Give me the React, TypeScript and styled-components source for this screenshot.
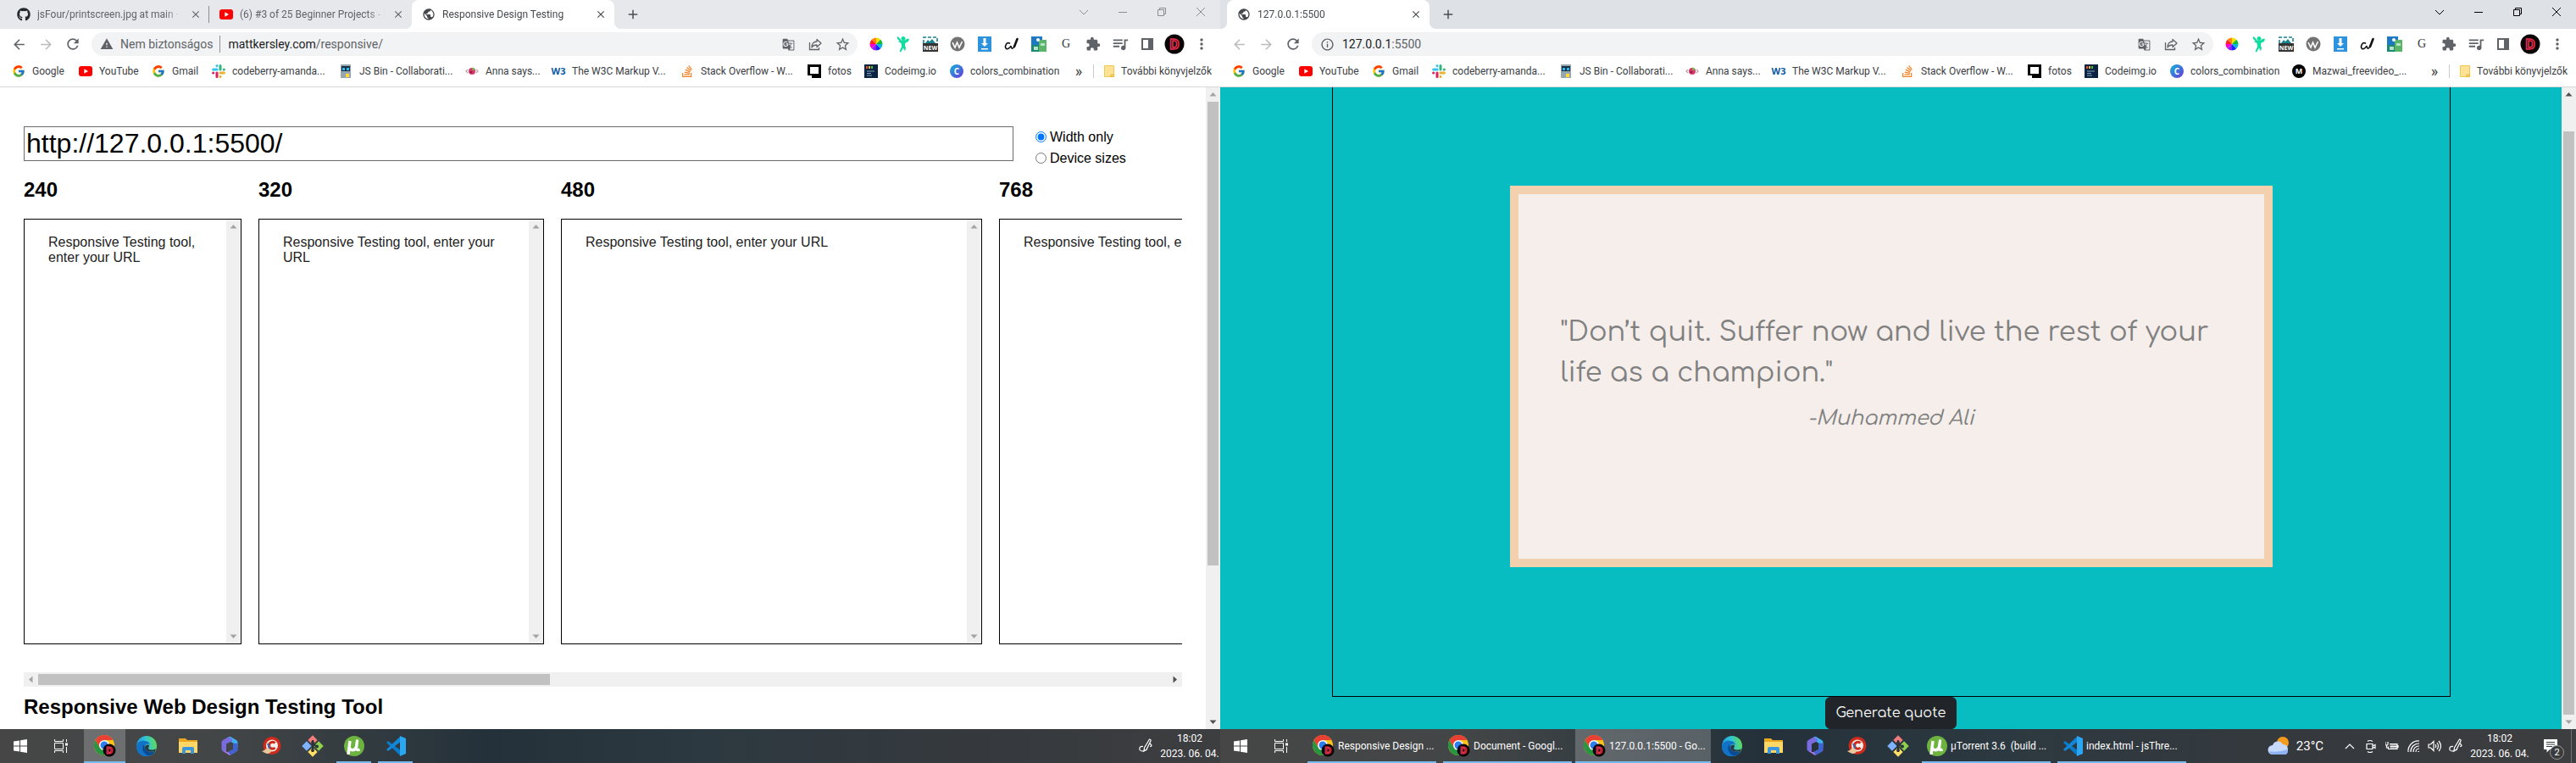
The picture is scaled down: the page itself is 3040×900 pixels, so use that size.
import React, { ReactNode } from "react";
import styled, { createGlobalStyle, css } from "styled-components";
import { FaGithub, FaStackOverflow } from "react-icons/fa";
import { FcGoogle } from "react-icons/fc";
import {
  MdAdd,
  MdArrowBack,
  MdArrowForward,
  MdClose,
  MdExtension,
  MdGTranslate,
  MdInfoOutline,
  MdMoreVert,
  MdPublic,
  MdQueueMusic,
  MdRefresh,
  MdStarBorder,
  MdWarning,
} from "react-icons/md";

const ui = `"Segoe UI", Roboto, "Open Sans", sans-serif`;
const arial = `Arial, "Liberation Sans", sans-serif`;
const rounded = `Comfortaa, Lato, sans-serif`;

const GlobalStyle = createGlobalStyle`
  * { box-sizing: border-box; }
  body { margin: 0; font-family: ${ui}; overflow: hidden; }
  button { border: 0; padding: 0; background: none; font: inherit; color: inherit; cursor: pointer; }
  a { color: inherit; text-decoration: none; }
  svg { display: block; flex: none; }
`;

/* ---------- Layout ---------- */

const Desktop = styled.div`
  display: grid;
  grid-template-columns: 18fr 20fr;
  height: 100vh;
`;

const Screen = styled.section`
  display: flex;
  flex-direction: column;
  min-width: 0;
  min-height: 0;
`;

const Viewport = styled.div`
  display: flex;
  flex: 1;
  min-height: 0;
  background: #fff;
`;

/* ---------- Browser chrome ---------- */

const TabStrip = styled.div<{ $focused: boolean }>`
  display: flex;
  align-items: stretch;
  height: 34px;
  padding-left: 8px;
  background: ${(p) => (p.$focused ? "#dee1e6" : "#e7e8ec")};
  color: ${(p) => (p.$focused ? "#000" : "#8b8d91")};
`;

const TabItem = styled.div<{ $active?: boolean; $divider?: boolean }>`
  position: relative;
  display: flex;
  align-items: center;
  gap: 8px;
  width: 239px;
  padding: 0 8px 0 12px;
  color: #5f6368;
  font-size: 12px;
  ${(p) =>
    p.$active &&
    css`
      background: #fff;
      color: #45494d;
      border-radius: 8px 8px 0 0;
      &::before,
      &::after {
        content: "";
        position: absolute;
        bottom: 0;
        width: 8px;
        height: 8px;
      }
      &::before {
        left: -8px;
        background: radial-gradient(circle at 0 0, transparent 8px, #fff 8px);
      }
      &::after {
        right: -8px;
        background: radial-gradient(circle at 100% 0, transparent 8px, #fff 8px);
      }
    `}
  ${(p) =>
    p.$divider &&
    css`
      &::after {
        content: "";
        position: absolute;
        right: 0;
        top: 7px;
        width: 1px;
        height: 20px;
        background: #8a8d91;
      }
    `}
`;

const TabTitle = styled.span`
  flex: 1;
  overflow: hidden;
  white-space: nowrap;
  mask-image: linear-gradient(90deg, #000 88%, transparent);
`;

const IconButton = styled.button<{ $size?: number }>`
  display: flex;
  align-items: center;
  justify-content: center;
  flex: none;
  width: ${(p) => p.$size ?? 32}px;
  height: ${(p) => Math.min(p.$size ?? 28, 28)}px;
`;

const NewTab = styled(IconButton)`
  align-self: center;
  margin-left: 8px;
  color: #4b4e52;
`;

const Caption = styled.div`
  display: flex;
  align-items: center;
  height: 28px;
  margin-left: auto;
`;

const CaptionButton = styled.button`
  display: flex;
  align-items: center;
  justify-content: center;
  width: 46px;
  height: 28px;
`;

const Toolbar = styled.div`
  display: flex;
  align-items: center;
  height: 36px;
  padding: 0 6px;
  background: #fff;
  color: #5f6368;
`;

const Faded = styled.span<{ $on: boolean }>`
  color: ${(p) => (p.$on ? "#5f6368" : "#babcbe")};
`;

const AddressBar = styled.div`
  display: flex;
  align-items: center;
  flex: 1;
  height: 28px;
  margin: 0 6px;
  padding: 0 2px 0 10px;
  border-radius: 14px;
  background: #f1f3f4;
  font-size: 14px;
`;

const SiteInfo = styled.button<{ $warn: boolean }>`
  display: flex;
  align-items: center;
  gap: 8px;
  padding-right: ${(p) => (p.$warn ? 8 : 0)}px;
  margin-right: 9px;
  white-space: nowrap;
  border-right: ${(p) => (p.$warn ? "1px solid #8d9094" : "0")};
  line-height: 20px;
`;

const Url = styled.span`
  flex: 1;
  white-space: nowrap;
  b {
    font-weight: 400;
    color: #202124;
  }
`;

const Extensions = styled.div`
  display: flex;
  align-items: center;
`;

const BookmarksBar = styled.nav`
  display: flex;
  align-items: center;
  height: 33px;
  padding: 0 10px 4px 14px;
  background: #fff;
  border-bottom: 1px solid #d5d7da;
  color: #3c4043;
  font-size: 12px;
`;

const Bookmark = styled.a<{ $width?: number }>`
  display: flex;
  align-items: center;
  gap: 8px;
  flex: none;
  width: ${(p) => (p.$width ? p.$width + "px" : "auto")};
  white-space: nowrap;
`;

const More = styled.button`
  width: 20px;
  margin-left: auto;
  padding-right: 4px;
  font-size: 18px;
  line-height: 20px;
`;

const Divider = styled.span`
  width: 1px;
  height: 16px;
  margin: 0 12px 0 5px;
  background: #c9cccf;
`;

/* ---------- Scroll bars ---------- */

const ScrollTrack = styled.div<{ $row?: boolean }>`
  display: flex;
  flex: none;
  flex-direction: ${(p) => (p.$row ? "row" : "column")};
  ${(p) => (p.$row ? "height: 17px;" : "width: 17px;")}
  background: #f0f0f0;
`;

const ScrollArrow = styled.button<{ $dim?: boolean }>`
  display: flex;
  align-items: center;
  justify-content: center;
  flex: none;
  width: 17px;
  height: 17px;
  color: ${(p) => (p.$dim ? "#a3a3a3" : "#505050")};
`;

const ScrollSpace = styled.div<{ $grow: number }>`
  flex: ${(p) => p.$grow} 1 0;
`;

const ScrollThumb = styled(ScrollSpace)<{ $row?: boolean }>`
  margin: ${(p) => (p.$row ? "2px 0" : "0 2px")};
  background: #c1c1c1;
`;

const turn = { up: 0, right: 90, down: 180, left: 270 };

const Arrow = ({ to, dim }: { to: keyof typeof turn; dim?: boolean }) => (
  <ScrollArrow $dim={dim} aria-label={"Scroll " + to}>
    <svg width="9" height="9" viewBox="0 0 9 9" fill="currentColor">
      <path d="M4.5 2 8.5 6.5h-8z" transform={`rotate(${turn[to]} 4.5 4.5)`} />
    </svg>
  </ScrollArrow>
);

type ScrollProps = { row?: boolean; before?: number; size?: number; after?: number; dimStart?: boolean; dimEnd?: boolean };

const ScrollBar = ({ row, before = 0, size = 0, after = 0, dimStart, dimEnd }: ScrollProps) => (
  <ScrollTrack $row={row}>
    <Arrow to={row ? "left" : "up"} dim={dimStart} />
    {before > 0 && <ScrollSpace $grow={before} />}
    {size > 0 ? <ScrollThumb $grow={size} $row={row} /> : <ScrollSpace $grow={1} />}
    {after > 0 && <ScrollSpace $grow={after} />}
    <Arrow to={row ? "right" : "down"} dim={dimEnd} />
  </ScrollTrack>
);

/* ---------- Icons ---------- */

const YouTube = () => (
  <svg width="16" height="16" viewBox="0 0 16 16">
    <rect y="2" width="16" height="12" rx="3" fill="#f00" />
    <path d="M6.3 5.3v5.4L11 8z" fill="#fff" />
  </svg>
);

const Slack = () => (
  <svg width="16" height="16" viewBox="0 0 16 16" strokeWidth="3" strokeLinecap="round" fill="none">
    <path d="M6 1.6v.2M1.6 6h4.5" stroke="#36c5f0" />
    <path d="M10 1.6V6M14.3 6h.1" stroke="#2eb67d" />
    <path d="M14.4 10H10M10 14.3v.1" stroke="#ecb22e" />
    <path d="M6 14.4V10M1.6 10h.1" stroke="#e01e5a" />
  </svg>
);

const JsBin = () => (
  <svg width="16" height="16" viewBox="0 0 16 16">
    <path d="M2 0h12v16H2z" fill="#97a5ad" />
    <path d="M3 2h10v6H3z" fill="#143048" />
    <path d="M4 4h3v3H4zM9 4h3v3H9z" fill="#35b8e8" />
    <path d="M8 11h4v4H8z" fill="#ffd93b" />
  </svg>
);

const Anna = () => (
  <svg width="16" height="16" viewBox="0 0 16 16" fill="none">
    <path d="M3 6 1 8l2 2M13 6l2 2-2 2" stroke="#b9a3a3" strokeWidth="1.3" />
    <circle cx="8" cy="8" r="4" fill="#d63a6e" />
    <path d="M8 3.500c2 0 3 1 4 2.500L8.500 7z" fill="#7bbf3f" />
    <circle cx="7" cy="9" r="1.300" fill="#8f1848" />
  </svg>
);

const Mark = styled.span<{ $bg?: string; $fg: string; $round?: boolean; $serif?: boolean; $px?: number }>`
  display: flex;
  align-items: center;
  justify-content: center;
  flex: none;
  width: 16px;
  height: 16px;
  border-radius: ${(p) => (p.$round ? "50%" : "0")};
  background: ${(p) => p.$bg ?? "none"};
  color: ${(p) => p.$fg};
  font: ${(p) => (p.$serif ? "400" : "700")} ${(p) => p.$px ?? 10}px/16px
    ${(p) => (p.$serif ? `"Liberation Serif", serif` : `"Open Sans", sans-serif`)};
`;

const Frame = () => (
  <svg width="16" height="16" viewBox="0 0 16 16">
    <path d="M0 0h16v16H5v-3H0z" fill="#000" />
    <path d="M3 3h10v8H3z" fill="#fff" />
    <path d="M0 13h4v3H0z" fill="#fff" />
  </svg>
);

const CodeImg = () => (
  <svg width="16" height="16" viewBox="0 0 16 16">
    <path d="M0 0h16v16H0z" fill="#0c2340" />
    <path d="M2 2h2v3H2z" fill="#e4572e" />
    <path d="M5 2h2v3H5z" fill="#f0b429" />
    <path d="M8 2h2v3H8z" fill="#3fb950" />
    <path d="M3 8h9M3 10.500h5M3 13h6" stroke="#7fa3c7" />
  </svg>
);

const Folder = () => (
  <svg width="12" height="16" viewBox="0 0 12 16">
    <path d="M.5 1.500h11v13H.5z" fill="#fde293" stroke="#f0c94a" />
    <path d="M8 12h3.500v2.500H8z" fill="#f6d365" stroke="#e8bb30" />
  </svg>
);

const Wheel = () => (
  <svg width="16" height="16" viewBox="-8 -8 16 16">
    {["#f0e000", "#f80", "#f22", "#f0c", "#82f", "#22f", "#0bd", "#1b3"].map((c, i) => (
      <path key={c} d="M0 0V-7.500A7.500 7.500 0 0 1 5.300-5.300z" fill={c} transform={`rotate(${i * -45})`} />
    ))}
  </svg>
);

const Fairy = () => (
  <svg width="16" height="20" viewBox="0 0 16 20" fill="#12dca0">
    <circle cx="8" cy="3.500" r="2.500" />
    <path d="M1 1c2 1 3 2 4.500 4.500L9 6l4-2.500 2 .5-1 3-3.500 1.500-.5 3 1 3-1 4-2-4-3 5-1.500-1L6 13l-.500-4L2 7l1.500-1L1 4z" />
  </svg>
);

const NewShot = () => (
  <svg width="18" height="18" viewBox="0 0 18 18">
    <path d="M1 8V1h16v7" fill="none" stroke="#16838f" strokeWidth="1.600" strokeDasharray="4 2" />
    <path d="m3 8 3-4 2 2 3-3 4 5z" fill="#16838f" />
    <path d="M0 8h18v10H0z" fill="#333" />
    <text x="9" y="16" fill="#fff" fontSize="7" fontWeight="700" textAnchor="middle" fontFamily="Open Sans">NEW</text>
  </svg>
);

const WIcon = () => (
  <svg width="18" height="18" viewBox="0 0 18 18">
    <circle cx="9" cy="9" r="8.500" fill="#737373" />
    <path d="m3 7 3 6 2.500-6 2.500 6 3.500-7" fill="none" stroke="#fff" strokeWidth="1.600" />
  </svg>
);

const Download = () => (
  <svg width="16" height="18" viewBox="0 0 16 18">
    <path d="M0 0h16v18H0z" fill="#2d93dc" />
    <path d="M6.500 2h3v6H12l-4 4-4-4h2.500zM4 14h8v1.500H4z" fill="#fff" />
  </svg>
);

const Brush = () => (
  <svg width="18" height="16" viewBox="0 0 18 16" fill="none" stroke="#111" strokeLinecap="round">
    <path d="M6.500 7C3 5 0 11 2.500 13.500 4.500 14.500 7 12 8 10c0 3 1.500 4 3 2" strokeWidth="1.600" />
    <path d="m15.500 2-3.500 9" strokeWidth="2.600" />
  </svg>
);

const MapTile = () => (
  <svg width="18" height="18" viewBox="0 0 18 18">
    <path d="M0 0h9v18H0z" fill="#1c8a70" />
    <path d="M0 0h13v10H0z" fill="#1f78c4" />
    <path d="M9 4h9v14H9z" fill="#58b56a" />
    <path d="M3 12h5v4H3zM11 8h5v3h-5z" fill="#b8e2c4" />
    <circle cx="8" cy="4" r="2" fill="#fff" />
  </svg>
);

const Share = () => (
  <svg width="16" height="16" viewBox="0 0 16 16" fill="none" stroke="currentColor" strokeWidth="1.300">
    <path d="M1.500 6v8.500h11V12" />
    <path d="M10 2.500 15 7l-5 4.500V9C7 9 5 10 4 12c0-4 2-7 6-7z" strokeLinejoin="round" />
  </svg>
);

const SidePanel = () => (
  <svg width="14" height="14" viewBox="0 0 14 14">
    <path d="M0 0h14v14H0zM2 2v10h6V2z" fill="#5f6368" fillRule="evenodd" />
  </svg>
);

const Profile = () => (
  <svg width="24" height="24" viewBox="0 0 24 24">
    <circle cx="12" cy="12" r="11.500" fill="#0a0608" />
    <text x="12" y="18" fill="none" stroke="#e8304f" strokeWidth="1.500" fontSize="16" fontWeight="700" textAnchor="middle" fontFamily="Open Sans">D</text>
  </svg>
);

const ChromeLogo = () => (
  <svg width="26" height="26" viewBox="0 0 26 26">
    <circle cx="12" cy="12" r="12" fill="#fbc21b" />
    <path d="M1.600 6A12 12 0 0 0 12 24l5.200-9L12 12 6.800 15z" fill="#27963f" />
    <path d="M12 6h10.400A12 12 0 0 0 1.600 6l5.200 9z" fill="#ea3f33" />
    <circle cx="12" cy="12" r="6" fill="#fff" />
    <circle cx="12" cy="12" r="4.500" fill="#2d7cf0" />
    <circle cx="18" cy="18" r="7.500" fill="#0a0608" />
    <text x="18" y="22" fill="none" stroke="#e8304f" strokeWidth="1.200" fontSize="11" fontWeight="700" textAnchor="middle" fontFamily="Open Sans">D</text>
  </svg>
);

const EdgeLogo = () => (
  <svg width="24" height="24" viewBox="0 0 24 24">
    <defs>
      <linearGradient id="edgeTop" x1="0" y1="0.600" x2="1" y2="0.400">
        <stop offset="0" stopColor="#1e8fe0" />
        <stop offset=".5" stopColor="#2fc3d8" />
        <stop offset="1" stopColor="#5fdc5a" />
      </linearGradient>
    </defs>
    <circle cx="12" cy="12" r="12" fill="url(#edgeTop)" />
    <path d="M0 12c1-5 6-7 10-6 4 0 6 3 6 5-1-2-5-2-6 1-2 4 3 9 12 6-3 5-8 7-13 6C3 23 0 18 0 12z" fill="#1272c4" />
    <path d="M9 10c-4 4-1 12 6 13.500 3-.5 6-3 7-5.500-6 3-13 0-13-8z" fill="#0b4a94" />
    <path d="M10 13c1-3 5-3 5-1 0 1-1 2-1 3 2 2 6 2 9 0l-1 3c-6 2-12 0-12-5z" fill="#2a3a42" />
  </svg>
);

const Explorer = () => (
  <svg width="22" height="20" viewBox="0 0 22 20">
    <path d="M0 1h8l2 2h12v15H0z" fill="#e9a820" />
    <path d="M0 5h22v13H0z" fill="#ffd767" />
    <path d="M4 19v-6q0-2 2-2h10q2 0 2 2v6h-4v-4H8v4z" fill="#3a96dd" />
  </svg>
);

const Office = () => (
  <svg width="22" height="24" viewBox="0 0 22 24">
    <path d="M10 1q1-.6 2 0l7 4q1.500 1 1.500 2.500V14L15 11V8.500L9 5z" fill="#3fb0ee" />
    <path d="M10 1 3 5Q1.500 6 1.500 7.500v8Q1.500 17 3 18l4 2.300V9.500L14 6V4.500z" fill="#7b6be0" />
    <path d="M3 17.800 10 22.500q1 .6 2 0l7-4q1.500-1 1.500-2.500l-7 .8-4.500 2.500z" fill="#a977e6" />
    <path d="M20.500 9v7q0 1.500-1.500 2.500l-7 4-2.500-3.500L15 16V8.500z" fill="#3f63d0" />
  </svg>
);

const CCleaner = () => (
  <svg width="24" height="24" viewBox="0 0 24 24">
    <circle cx="13" cy="11.500" r="10.500" fill="#cf2b1d" />
    <circle cx="13" cy="11.500" r="7" fill="#f4efe9" />
    <path d="M16.500 8.500A4 4 0 1 0 16.500 14" fill="none" stroke="#cf2b1d" strokeWidth="3" />
    <path d="m8 9 2 6" stroke="#2c6fb5" strokeWidth="2" />
    <path d="M7 14q4 1.500 5 4.500-2 3-5 2.500-3-1-6-3 4-1 6-4z" fill="#e9c69b" />
  </svg>
);

const GitLogo = () => (
  <svg width="26" height="26" viewBox="0 0 26 26">
    <g transform="rotate(45 13 13)">
      <path d="M4 4h8v8H4z" fill="#f27c7c" />
      <path d="M14 4h8v8h-8z" fill="#8fd14f" />
      <path d="M14 14h8v8h-8z" fill="#ffe066" />
      <path d="M4 14h8v8H4z" fill="#7fb2ff" />
    </g>
    <path d="M13 6v14M13 10l5 4" stroke="#2c3338" strokeWidth="2" />
    <g fill="#2c3338">
      <circle cx="13" cy="9" r="2" />
      <circle cx="13" cy="18" r="2" />
      <circle cx="18" cy="13.500" r="2" />
    </g>
  </svg>
);

const Torrent = () => (
  <svg width="24" height="24" viewBox="0 0 24 24">
    <circle cx="12" cy="12" r="12" fill="#6cb33f" />
    <path d="m7 6-2 16M7 6l-.8 7c0 5 7 5 8.300 0l1-7-1 8c0 3 2 3 4 2" fill="none" stroke="#fff" strokeWidth="3.400" strokeLinejoin="round" />
  </svg>
);

const VsCode = () => (
  <svg width="24" height="24" viewBox="0 0 24 24">
    <path d="m1 8 2-2 16 12-2 5z" fill="#0a7bc9" />
    <path d="m1 16 2 2L19 6l-2-5z" fill="#1287d8" />
    <path d="m17 0 7 3v18l-7 3z" fill="#2aa6f2" />
  </svg>
);

const WindowsLogo = () => (
  <svg width="16" height="16" viewBox="0 0 16 16" fill="#fff">
    <path d="m0 2.500 7-1v6H0zM8 1.300 16 0v7.500H8zM0 8.500h7v6l-7-1zM8 8.500h8V16l-8-1.300z" />
  </svg>
);

const TaskView = () => (
  <svg width="18" height="16" viewBox="0 0 18 16" fill="none" stroke="#fff">
    <path d="M1.500 0v2.500h10V0M1.500 16v-2.500h10V16M1.500 4.500h10v7h-10zM15.500 0v3M15.500 9v7" />
    <path d="M14 4.500h3v3h-3z" fill="#fff" stroke="none" />
  </svg>
);

const Pen = () => (
  <svg width="18" height="18" viewBox="0 0 18 18" fill="none" stroke="#fff" strokeWidth="1.200">
    <path d="M13.500 1q2 0 1.500 2L10 13l-3 2 .5-4zM6 9.500Q1 9 2 13.500q2 3 8 0 1-1 .5-2.500M14 6q4 3 0 3.500" />
  </svg>
);

const Weather = () => (
  <svg width="26" height="22" viewBox="0 0 26 22">
    <circle cx="18" cy="7" r="7" fill="#f59b1c" />
    <path d="M6 21a5 5 0 0 1 0-11 6.500 6.500 0 0 1 12-1q6 0 6 6t-4 6z" fill="#c6d9fb" />
    <path d="M6 21a5 5 0 0 1-4-4q10 2 22-2 0 6-4 6z" fill="#8fb2f3" />
  </svg>
);

const trayPaths: Record<string, string> = {
  show: "m3 11 5-5 5 5",
  camera: "M3 5.500h7v6H3zM10 8l3-1.500v4L10 9M4 2.500q3-2 6 0M4 14.500q3 2 6 0",
  battery: "M5 5.500h9v6H3.500v-3M15 7v3M0 3v3q0 1 1.500 1T3 6V3M1.500 7v3H3M5.500 8.500h8M5.500 7h8M5.500 10h8",
  wifi: "M2 15A12 12 0 0 1 15 2M5 15A9.500 9.500 0 0 1 15 5M8 15a6.500 6.500 0 0 1 7-7M11 15a4 4 0 0 1 4-4M13.500 14.500h1.500",
  volume: "M1 6h2.500L7 2.500v11L3.500 10H1zM9 6q1.500 2 0 4M11 4q3 4 0 8M13 2q5 6 0 12",
};

const TrayIcon = ({ name }: { name: string }) => (
  <svg width="16" height="16" viewBox="0 0 16 16" fill="none" stroke="#fff" strokeWidth="1.200">
    <path d={trayPaths[name]} />
  </svg>
);

const captionPaths: [string, string][] = [
  ["Tab search", "M0 3l5 5 5-5"],
  ["Minimize", "M0 5.500h10"],
  ["Restore", "M.5 2.500h7v7h-7zM2.500 2.500v-2h7v7h-2"],
  ["Close", "M0 0l10 10M10 0 0 10"],
];

/* ---------- Browser ---------- */

const bookmarks: { label: string; width: number; icon: ReactNode }[] = [
  { label: "Google", width: 79, icon: <FcGoogle size={16} /> },
  { label: "YouTube", width: 86, icon: <YouTube /> },
  { label: "Gmail", width: 71, icon: <FcGoogle size={16} /> },
  { label: "codeberry-amanda...", width: 150, icon: <Slack /> },
  { label: "JS Bin - Collaborati...", width: 149, icon: <JsBin /> },
  { label: "Anna says...", width: 102, icon: <Anna /> },
  { label: "The W3C Markup V...", width: 152, icon: <Mark $fg="#0b5aa4" $px={11}>W3</Mark> },
  { label: "Stack Overflow - W...", width: 150, icon: <FaStackOverflow size={16} color="#f48024" /> },
  { label: "fotos", width: 67, icon: <Frame /> },
  { label: "Codeimg.io", width: 101, icon: <CodeImg /> },
  { label: "colors_combination", width: 144, icon: <Mark $bg="linear-gradient(135deg,#12b5d8,#6a35dd)" $fg="#fff" $round>C</Mark> },
];

const mazwai = {
  label: "Mazwai_freevideo_...",
  width: 132,
  icon: <Mark $bg="#000" $fg="#fff" $round $px={9}>M</Mark>,
};

const extensions: [string, ReactNode][] = [
  ["Color picker", <Wheel />],
  ["Fairy", <Fairy />],
  ["Screenshot", <NewShot />],
  ["Wappalyzer", <WIcon />],
  ["Download", <Download />],
  ["Fonts", <Brush />],
  ["Map", <MapTile />],
  ["Grammar", <Mark $fg="#333" $serif $px={14}>G</Mark>],
  ["Extensions", <MdExtension size={18} />],
  ["Media", <MdQueueMusic size={22} />],
  ["Side panel", <SidePanel />],
  ["Profile", <Profile />],
  ["Menu", <MdMoreVert size={20} />],
];

type TabData = { title: string; icon: ReactNode; active?: boolean; divider?: boolean };
type ChromeProps = {
  focused: boolean;
  tabs: TabData[];
  canGoBack: boolean;
  warning?: string;
  host: string;
  path: string;
  extra?: typeof bookmarks;
};

const BrowserChrome = ({ focused, tabs, canGoBack, warning, host, path, extra = [] }: ChromeProps) => (
  <header>
    <TabStrip $focused={focused}>
      {tabs.map((t) => (
        <TabItem key={t.title} $active={t.active} $divider={t.divider}>
          {t.icon}
          <TabTitle>{t.title}</TabTitle>
          <IconButton $size={16} aria-label="Close tab">
            <MdClose size={14} />
          </IconButton>
        </TabItem>
      ))}
      <NewTab $size={28} aria-label="New tab">
        <MdAdd size={18} />
      </NewTab>
      <Caption>
        {captionPaths.map(([label, d]) => (
          <CaptionButton key={label} aria-label={label}>
            <svg width="10" height="10" viewBox="0 0 10 10" fill="none" stroke="currentColor">
              <path d={d} />
            </svg>
          </CaptionButton>
        ))}
      </Caption>
    </TabStrip>
    <Toolbar>
      <IconButton aria-label="Back">
        <Faded $on={canGoBack}>
          <MdArrowBack size={19} />
        </Faded>
      </IconButton>
      <IconButton aria-label="Forward">
        <Faded $on={false}>
          <MdArrowForward size={19} />
        </Faded>
      </IconButton>
      <IconButton aria-label="Reload">
        <MdRefresh size={20} />
      </IconButton>
      <AddressBar>
        <SiteInfo $warn={!!warning} aria-label="Site information">
          {warning ? <MdWarning size={16} /> : <MdInfoOutline size={17} />}
          {warning}
        </SiteInfo>
        <Url>
          <b>{host}</b>
          {path}
        </Url>
        <IconButton aria-label="Translate">
          <MdGTranslate size={15} />
        </IconButton>
        <IconButton aria-label="Share">
          <Share />
        </IconButton>
        <IconButton aria-label="Bookmark">
          <MdStarBorder size={19} />
        </IconButton>
      </AddressBar>
      <Extensions>
        {extensions.map(([label, icon]) => (
          <IconButton key={label} aria-label={label}>
            {icon}
          </IconButton>
        ))}
      </Extensions>
    </Toolbar>
    <BookmarksBar>
      {[...bookmarks, ...extra].map((b) => (
        <Bookmark key={b.label} href="#" $width={b.width}>
          {b.icon}
          {b.label}
        </Bookmark>
      ))}
      <More aria-label="More bookmarks">»</More>
      <Divider />
      <Bookmark href="#">
        <Folder />
        További könyvjelzők
      </Bookmark>
    </BookmarksBar>
  </header>
);

/* ---------- Responsive testing page ---------- */

const TesterPage = styled.main`
  flex: 1;
  min-width: 0;
  padding: 46px 28px 0;
  overflow: hidden;
  color: #000;
  font: 16px/18px ${arial};
`;

const TesterForm = styled.form`
  display: flex;
  align-items: flex-start;
  gap: 26px;
`;

const UrlInput = styled.input`
  flex: 1;
  min-width: 0;
  height: 41px;
  padding: 1px 2px;
  border: 1px solid #6b6b6b;
  color: #000;
  font: 32px/36px ${arial};
`;

const Modes = styled.fieldset`
  width: 173px;
  margin: 0;
  padding: 0;
  border: 0;
`;

const Mode = styled.label`
  display: flex;
  align-items: center;
  gap: 4px;
  line-height: 25px;
  input {
    margin: 0;
    width: 13px;
    height: 13px;
  }
`;

const Heading = styled.h2`
  margin: 11px 0 20px;
  font-size: 24px;
  line-height: 28px;
`;

const PageTitle = styled.h1`
  margin: 10px 0 0;
  font-size: 24px;
  line-height: 28px;
`;

const Frames = styled.div`
  display: flex;
  gap: 20px;
  overflow: hidden;
  margin-bottom: 33px;
`;

const FrameColumn = styled.section<{ $width: number }>`
  flex: none;
  width: ${(p) => p.$width + 17}px;
`;

const FrameBox = styled.div`
  display: flex;
  height: 502px;
  border: 1px solid #000;
`;

const FrameText = styled.p`
  flex: 1;
  margin: 0;
  padding: 18px 28px;
  color: #222;
`;

const TesterSite = () => (
  <Viewport>
    <TesterPage>
      <TesterForm>
        <UrlInput aria-label="URL" defaultValue="http://127.0.0.1:5500/" />
        <Modes>
          <Mode>
            <input type="radio" name="mode" defaultChecked />
            Width only
          </Mode>
          <Mode>
            <input type="radio" name="mode" />
            Device sizes
          </Mode>
        </Modes>
      </TesterForm>
      <Frames>
        {[240, 320, 480, 768].map((w) => (
          <FrameColumn key={w} $width={w}>
            <Heading>{w}</Heading>
            <FrameBox>
              <FrameText>Responsive Testing tool, enter your URL</FrameText>
              <ScrollBar dimStart dimEnd />
            </FrameBox>
          </FrameColumn>
        ))}
      </Frames>
      <ScrollBar row size={604} after={729} dimStart />
      <PageTitle>Responsive Web Design Testing Tool</PageTitle>
    </TesterPage>
    <ScrollBar size={547} after={176} dimStart />
  </Viewport>
);

/* ---------- Quote page ---------- */

const QuotePage = styled.main`
  display: flex;
  flex-direction: column;
  align-items: center;
  flex: 1;
  min-width: 0;
  background: #07bdc2;
  font-family: ${rounded};
`;

const Container = styled.div`
  width: 100%;
  max-width: 1320px;
  padding: 116px 0 152px;
  border: solid #000;
  border-width: 0 1px 1px;
`;

const QuoteCard = styled.figure`
  display: flex;
  flex-direction: column;
  justify-content: center;
  max-width: 900px;
  height: 450px;
  margin: 0 auto;
  padding: 0 50px;
  border: 10px solid #f3d1af;
  background: #f5eeea;
  color: #808080;
`;

const Quote = styled.blockquote`
  margin: 0;
  font-size: 32px;
  line-height: 48px;
`;

const Author = styled.figcaption`
  margin: 12px 0 8px;
  font-size: 24px;
  font-style: italic;
  line-height: 36px;
  text-align: center;
`;

const GenerateButton = styled.button`
  height: 38px;
  padding: 0 12px;
  border: 1px solid #212529;
  border-radius: 6px;
  background: #212529;
  color: #fff;
  font-size: 16px;
  line-height: 24px;
`;

const QuoteSite = () => (
  <Viewport>
    <QuotePage>
      <Container>
        <QuoteCard>
          <Quote>"Don’t quit. Suffer now and live the rest of your life as a champion."</Quote>
          <Author>-Muhammed Ali</Author>
        </QuoteCard>
      </Container>
      <GenerateButton>Generate quote</GenerateButton>
    </QuotePage>
    <ScrollBar before={35} size={688} dimEnd />
  </Viewport>
);

/* ---------- Taskbar ---------- */

const TaskbarRoot = styled.footer`
  display: flex;
  flex: none;
  height: 40px;
  background: linear-gradient(90deg, #464646 0, #434647 18%, #24313a 40%, #2d3940 58%, #35393d 80%, #3d3e40 100%);
  color: #fff;
  font-size: 12px;
`;

const SystemButton = styled.button`
  display: flex;
  align-items: center;
  justify-content: center;
  width: 48px;
`;

const TaskList = styled.div`
  display: flex;
  margin-left: 3px;
`;

const TaskButton = styled.button<{ $wide?: boolean; $active?: boolean; $open?: boolean }>`
  position: relative;
  display: flex;
  align-items: center;
  justify-content: ${(p) => (p.$wide ? "flex-start" : "center")};
  gap: 4px;
  width: ${(p) => (p.$wide ? 160 : 49)}px;
  padding-left: ${(p) => (p.$wide ? 10 : 0)}px;
  background: ${(p) => (p.$active ? "rgba(255, 255, 255, 0.22)" : "none")};
  white-space: pre;
  ${(p) =>
    p.$open &&
    css`
      &::after {
        content: "";
        position: absolute;
        inset: auto ${p.$active ? 0 : 4}px 0;
        height: 2px;
        background: #76b9ed;
      }
    `}
`;

const Tray = styled.div`
  display: flex;
  align-items: center;
  margin-left: auto;
`;

const TrayButton = styled.button`
  display: flex;
  align-items: center;
  justify-content: center;
  width: 25px;
  height: 40px;
`;

const WeatherButton = styled.button`
  display: flex;
  align-items: center;
  gap: 8px;
  margin-right: 18px;
  font-size: 15px;
`;

const Clock = styled.div`
  width: 72px;
  margin-left: 4px;
  font-size: 12px;
  line-height: 18px;
  text-align: center;
  white-space: nowrap;
`;

const Notifications = styled.button`
  position: relative;
  display: flex;
  align-items: center;
  justify-content: center;
  width: 48px;
  height: 40px;
`;

const Count = styled.span`
  position: absolute;
  left: 23px;
  top: 19px;
  width: 17px;
  height: 17px;
  border: 1px solid #9a9a9a;
  border-radius: 50%;
  background: #3a3b3d;
  font-size: 11px;
  line-height: 15px;
`;

const ShowDesktop = styled.button`
  width: 6px;
  height: 40px;
  box-shadow: inset 1px 0 #6d7073;
`;

type Task = { name: string; icon: ReactNode; label?: string; active?: boolean; open?: boolean };

const pinned: Task[] = [
  { name: "Edge", icon: <EdgeLogo /> },
  { name: "Explorer", icon: <Explorer /> },
  { name: "Microsoft 365", icon: <Office /> },
  { name: "CCleaner", icon: <CCleaner /> },
  { name: "Git", icon: <GitLogo /> },
];

const leftTasks: Task[] = [
  { name: "Chrome", icon: <ChromeLogo />, active: true, open: true },
  ...pinned,
  { name: "Torrent", icon: <Torrent />, open: true },
  { name: "Code", icon: <VsCode />, open: true },
];

const rightTasks: Task[] = [
  { name: "Chrome 1", icon: <ChromeLogo />, label: "Responsive Design ...", open: true },
  { name: "Chrome 2", icon: <ChromeLogo />, label: "Document - Googl...", open: true },
  { name: "Chrome 3", icon: <ChromeLogo />, label: "127.0.0.1:5500 - Go...", open: true, active: true },
  ...pinned,
  { name: "Torrent", icon: <Torrent />, label: "µTorrent 3.6  (build ...", open: true },
  { name: "Code", icon: <VsCode />, label: "index.html - jsThre...", open: true },
];

const Taskbar = ({ tasks, full }: { tasks: Task[]; full?: boolean }) => (
  <TaskbarRoot>
    <SystemButton aria-label="Start">
      <WindowsLogo />
    </SystemButton>
    <SystemButton aria-label="Task view">
      <TaskView />
    </SystemButton>
    <TaskList>
      {tasks.map((t) => (
        <TaskButton key={t.name} aria-label={t.name} $wide={!!t.label} $active={t.active} $open={t.open}>
          {t.icon}
          {t.label}
        </TaskButton>
      ))}
    </TaskList>
    <Tray>
      {full && (
        <>
          <WeatherButton>
            <Weather />
            23°C
          </WeatherButton>
          {Object.keys(trayPaths).map((name) => (
            <TrayButton key={name} aria-label={name}>
              <TrayIcon name={name} />
            </TrayButton>
          ))}
        </>
      )}
      <TrayButton aria-label="Pen">
        <Pen />
      </TrayButton>
      <Clock>
        18:02
        <br />
        2023. 06. 04.
      </Clock>
      {full && (
        <Notifications aria-label="Notifications">
          <svg width="16" height="16" viewBox="0 0 16 16">
            <path d="M0 0h16v12H7l-3.500 3.500V12H0z" fill="#fff" />
            <path d="M3 3.500h10M3 6h10M3 8.500h7" stroke="#3a3b3d" />
          </svg>
          <Count>2</Count>
        </Notifications>
      )}
      {full && <ShowDesktop aria-label="Show desktop" />}
    </Tray>
  </TaskbarRoot>
);

export default function App() {
  return (
    <>
      <GlobalStyle />
      <Desktop>
        <Screen>
          <BrowserChrome
            focused={false}
            canGoBack
            warning="Nem biztonságos"
            host="mattkersley.com"
            path="/responsive/"
            tabs={[
              { title: "jsFour/printscreen.jpg at main · H", icon: <FaGithub size={16} color="#24292f" />, divider: true },
              { title: "(6) #3 of 25 Beginner Projects - H", icon: <YouTube /> },
              { title: "Responsive Design Testing", icon: <MdPublic size={16} />, active: true },
            ]}
          />
          <TesterSite />
          <Taskbar tasks={leftTasks} />
        </Screen>
        <Screen>
          <BrowserChrome
            focused
            canGoBack={false}
            host="127.0.0.1"
            path=":5500"
            extra={[mazwai]}
            tabs={[{ title: "127.0.0.1:5500", icon: <MdPublic size={16} />, active: true }]}
          />
          <QuoteSite />
          <Taskbar tasks={rightTasks} full />
        </Screen>
      </Desktop>
    </>
  );
}
